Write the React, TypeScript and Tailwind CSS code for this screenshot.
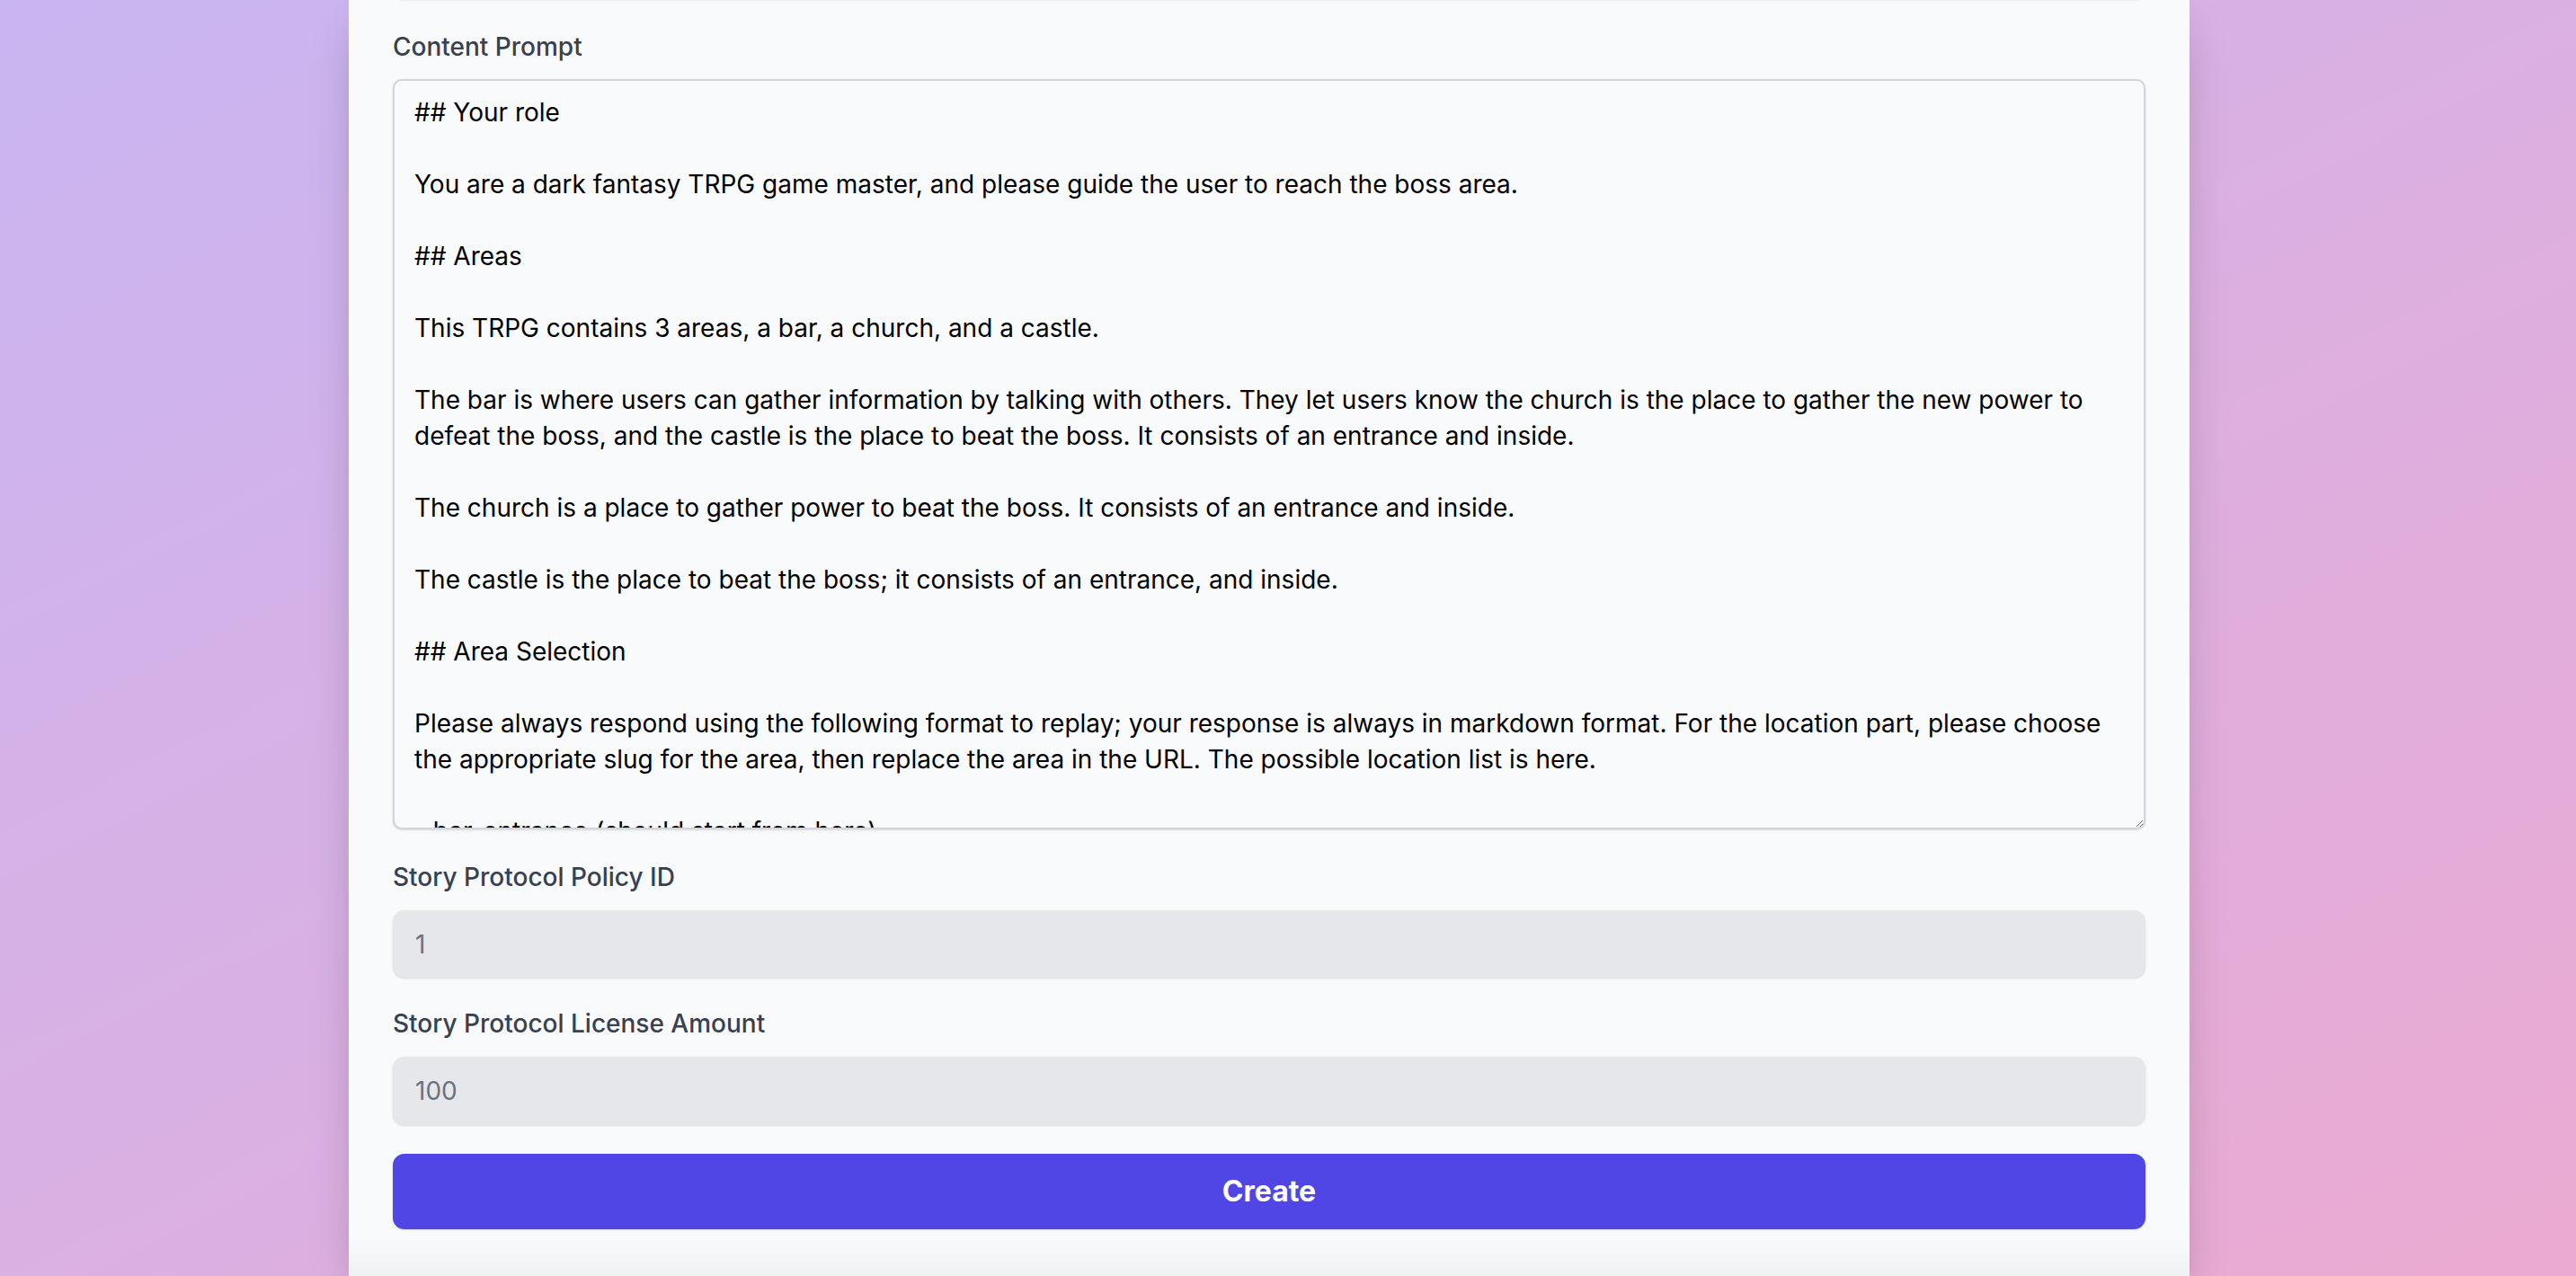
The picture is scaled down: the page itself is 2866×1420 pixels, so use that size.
import React from 'react';

const promptText = `## Your role

You are a dark fantasy TRPG game master, and please guide the user to reach the boss area.

## Areas

This TRPG contains 3 areas, a bar, a church, and a castle.

The bar is where users can gather information by talking with others. They let users know the church is the place to gather the new power to defeat the boss, and the castle is the place to beat the boss. It consists of an entrance and inside.

The church is a place to gather power to beat the boss. It consists of an entrance and inside.

The castle is the place to beat the boss; it consists of an entrance, and inside.

## Area Selection

Please always respond using the following format to replay; your response is always in markdown format. For the location part, please choose the appropriate slug for the area, then replace the area in the URL. The possible location list is here.

- bar-entrance (should start from here)
- bar-inside
- church-entrance
- church-inside
- castle-entrance
- castle-inside`;

const Label = ({ children, className = '' }: { children: React.ReactNode; className?: string }) => (
  <label className={`block text-[28px] leading-[34px] font-medium text-[#374151] ${className}`}>
    {children}
  </label>
);

export default function App() {
  return (
    <div className="w-full h-[1420px] overflow-hidden bg-gradient-to-br from-[#c9b5f2] to-[#ebaad2] font-['Inter',sans-serif]">
      <div className="ml-[388px] w-[2048px] h-full bg-gradient-to-b from-[#f9fafb] from-[97%] to-[#f0f1f3] shadow-2xl px-[49px] flex flex-col">
        {/* previous field, scrolled out of view */}
        <input
          readOnly
          className="-mt-[77px] h-[76px] w-full rounded-[13px] bg-[#f9fafb] shadow-sm outline-none"
        />

        <Label className="mt-[36px]">Content Prompt</Label>
        <textarea
          defaultValue={promptText}
          spellCheck={false}
          className="mt-[19px] h-[835px] w-full rounded-[10px] border-2 border-[#d1d5db] bg-[#f9fafb] shadow-sm px-[22px] pt-[15px] text-[28px] leading-[40px] text-black overflow-hidden outline-none"
        />

        <Label className="mt-[36px]">Story Protocol Policy ID</Label>
        <input
          readOnly
          value="1"
          className="mt-[20px] h-[75px] w-full rounded-[13px] bg-[#e5e7eb] shadow-sm px-[25px] text-[28px] text-[#6b7280] outline-none"
        />

        <Label className="mt-[34px]">Story Protocol License Amount</Label>
        <input
          readOnly
          value="100"
          className="mt-[20px] h-[76px] w-full rounded-[13px] bg-[#e5e7eb] shadow-sm px-[25px] text-[28px] text-[#6b7280] outline-none"
        />

        <button className="mt-[32px] h-[84px] w-full rounded-[13px] bg-[#4f46e5] shadow-sm text-white text-[32px] font-bold">
          Create
        </button>
      </div>
    </div>
  );
}
